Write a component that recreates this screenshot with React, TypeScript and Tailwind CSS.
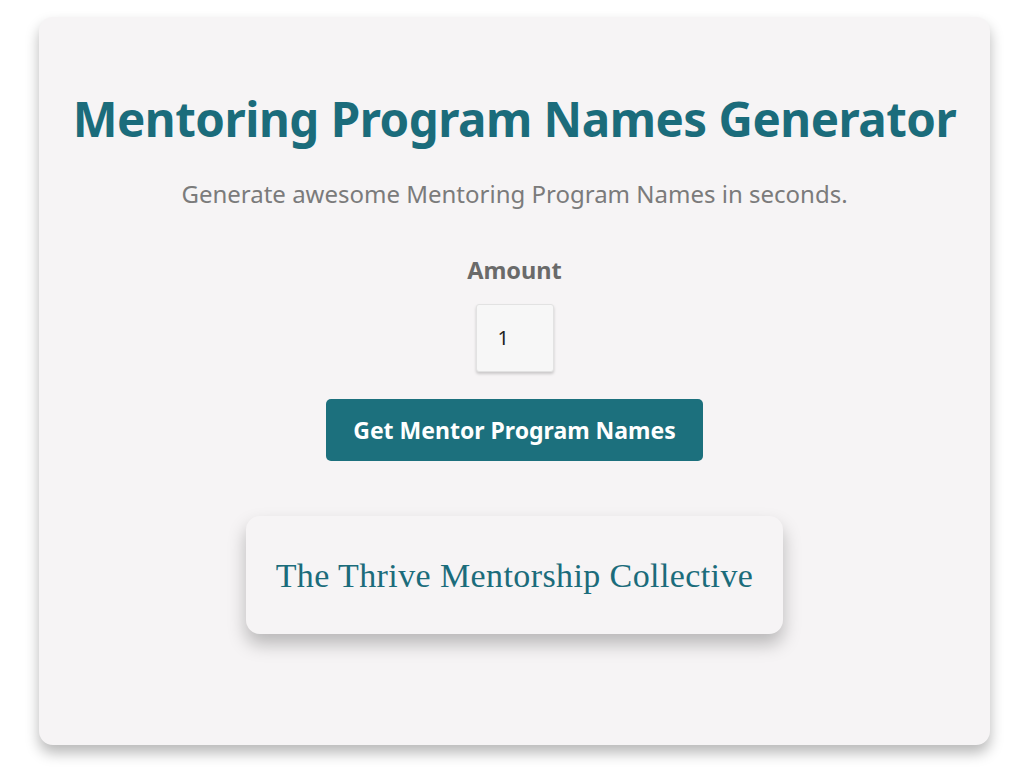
import React from 'react';

const sans = { fontFamily: '"Noto Sans", "Open Sans", sans-serif' };

export default function App() {
  return (
    <div className="min-h-[769px] w-[1024px] bg-white pt-[17px] pl-[39px]">
      <div
        className="flex h-[728px] w-[951px] flex-col items-center rounded-[14px] bg-[#f6f4f5] shadow-[0_8px_14px_rgba(0,0,0,0.28)]"
        style={sans}
      >
        <h1 className="mt-[74px] text-[47.5px] font-bold leading-[56px] tracking-[-0.5px] text-[#1b6c7b]">
          Mentoring Program Names Generator
        </h1>
        <p className="mt-[32px] text-[24px] leading-[30px] text-[#7b7b7b]">
          Generate awesome Mentoring Program Names in seconds.
        </p>
        <label className="mt-[46px] text-[23.5px] font-bold leading-[30px] text-[#6a6a6a]">Amount</label>
        <div className="mt-[19px] flex h-[68px] w-[78px] items-center rounded-[3px] border border-[#e2e2e2] bg-[#f7f7f7] pl-[21px] text-[20px] text-[#222] shadow-[0_2px_3px_rgba(0,0,0,0.18)]">
          1
        </div>
        <button className="mt-[27px] h-[62px] w-[377px] rounded-[5px] bg-[#1c707d] text-[23px] font-bold text-white">
          Get Mentor Program Names
        </button>
        <div className="mt-[55px] flex h-[118px] w-[537px] items-center justify-center rounded-[14px] bg-[#f6f4f5] shadow-[0_10px_18px_rgba(0,0,0,0.25)]">
          <span
            className="text-[34px] tracking-[0.4px] text-[#1b6c7b]"
            style={{ fontFamily: '"Liberation Serif", "DejaVu Serif", serif' }}
          >
            The Thrive Mentorship Collective
          </span>
        </div>
      </div>
    </div>
  );
}
